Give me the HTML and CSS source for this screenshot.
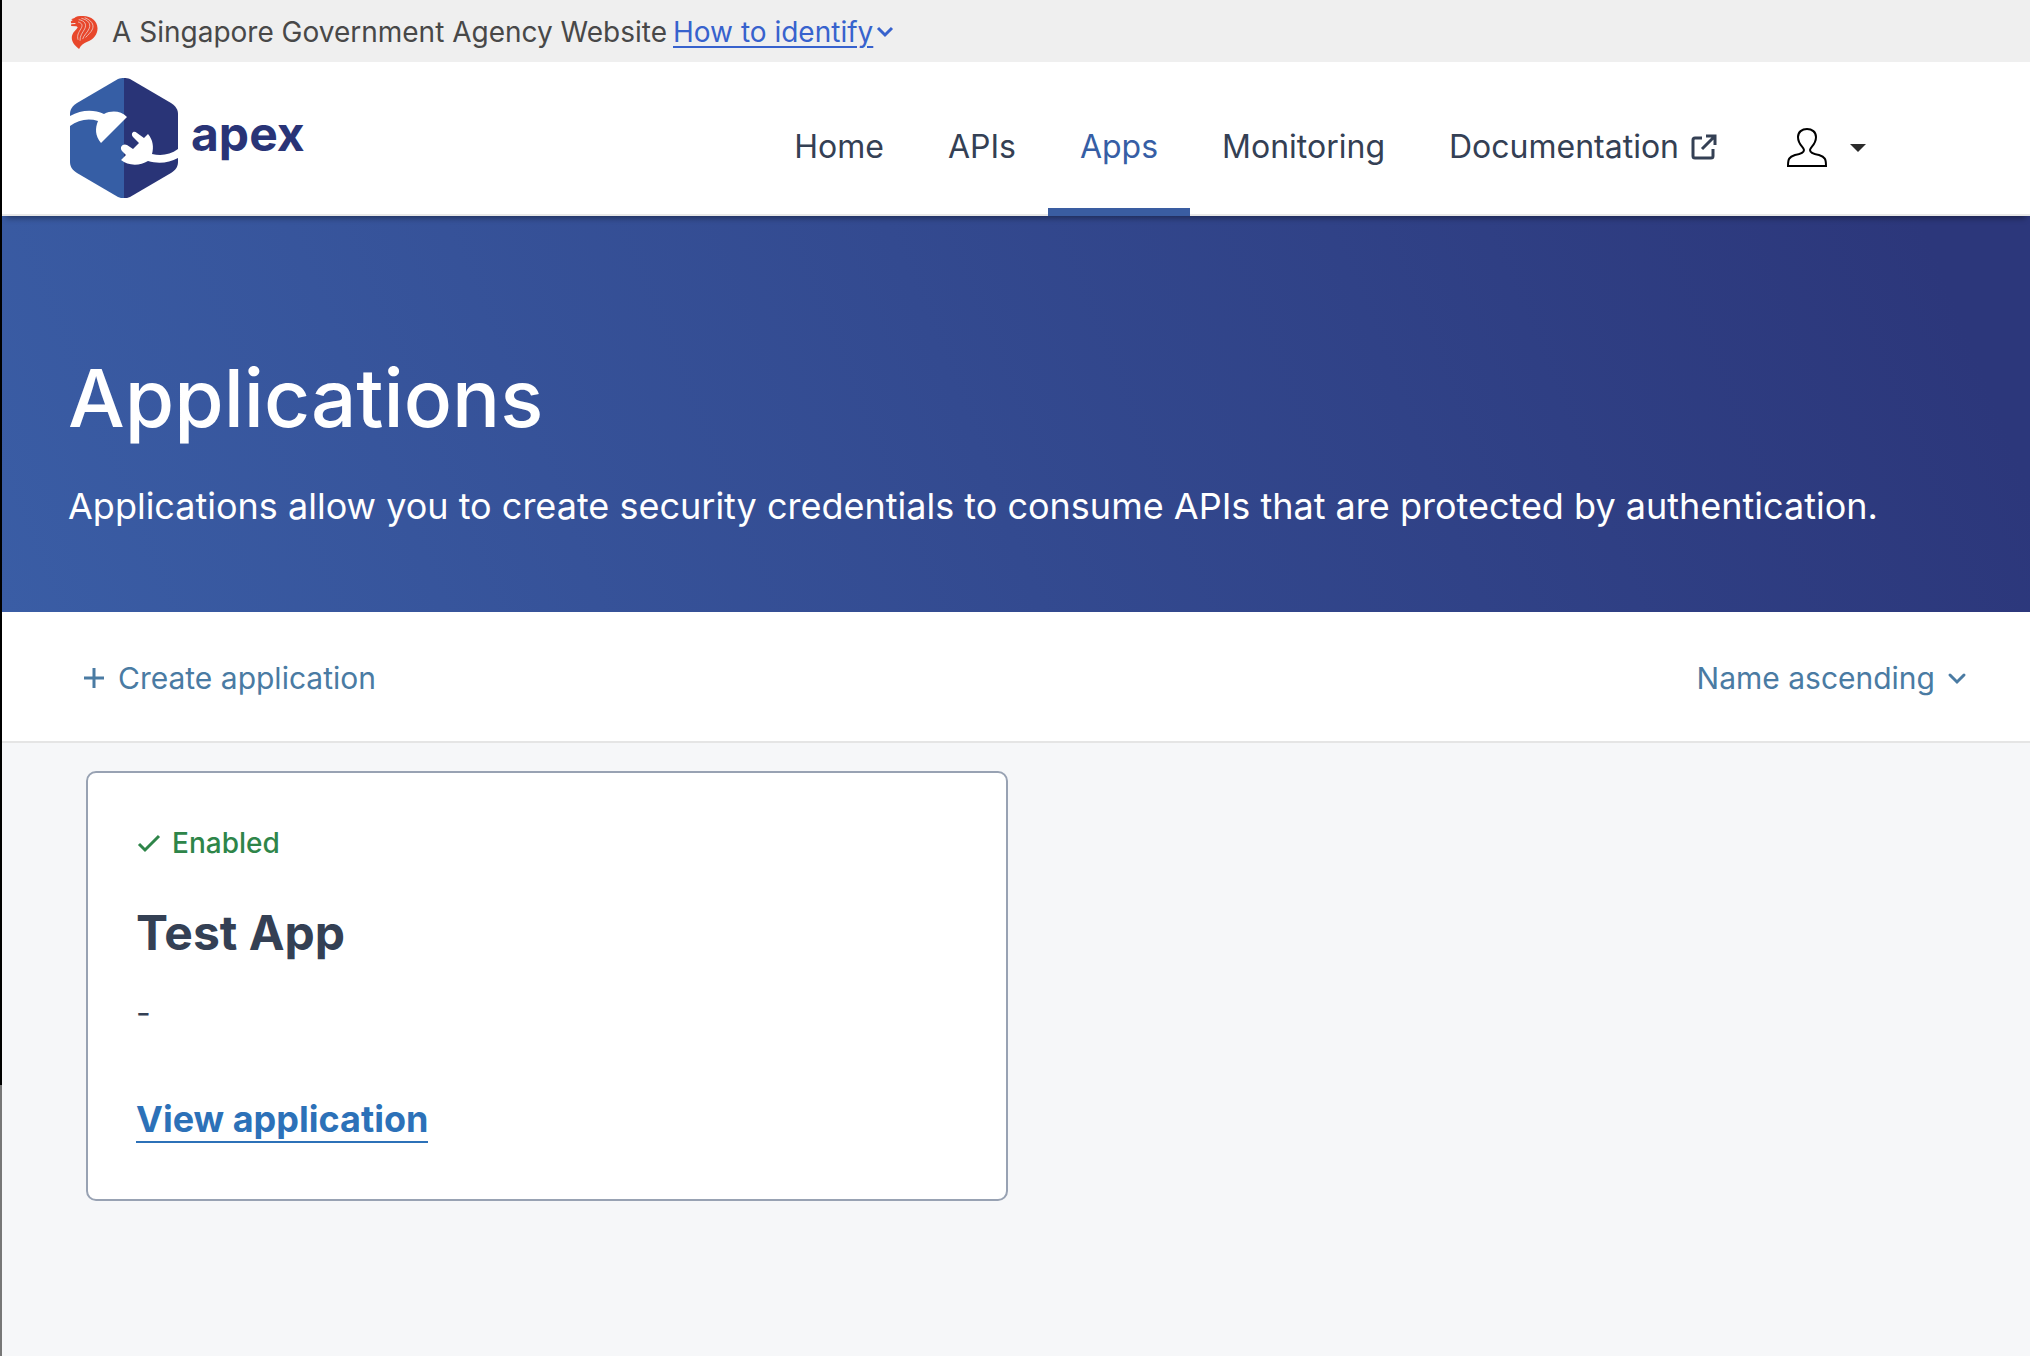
FILE: index.html
```html
<!DOCTYPE html>
<html lang="en">
<head>
<meta charset="utf-8">
<title>Applications - APEX</title>
<meta name="viewport" content="width=device-width, initial-scale=1">
<link rel="stylesheet" href="styles.css">
</head>
<body>
<div class="gov-banner">
  <svg class="lion" viewBox="21 36 82 100" aria-hidden="true">
    <path fill="#e8472b" d="M22 53l6-5-5-2 10-4c4-5 14-6 26-6 26 0 43 15 44 37 0 18-11 33-31 41-11 4-20 11-25 22-12-9-22-20-22-33 0-14 8-20 14-27l4-6-4-3-16-1v-5l13-1v-3l-13 1z"/>
    <g fill="none" stroke="#efefef" stroke-width="2"><path d="M44 54c12 3 15 10 9 20-7 12-13 20-9 34"/><path d="M46 47c18 3 25 14 18 28-6 12-15 20-14 36"/><path d="M54 43c21 5 29 16 24 30-5 13-17 21-20 33"/><path d="M64 41c20 8 29 20 24 34-5 12-14 17-21 26"/></g>
  </svg>
  <span>A Singapore Government Agency Website</span>
  <a class="identify" href="#identify"><span class="identify-text">How to identify</span><svg class="identify-chevron" viewBox="0 0 18 12" aria-hidden="true"><path d="M2 2l7 7 7-7" fill="none" stroke="currentColor" stroke-width="3"/></svg></a>
</div>

<header class="site-header">
  <a class="brand" href="#home">
    <svg class="brand-mark" viewBox="0 0 108 120" aria-hidden="true">
      <path fill="#365ea5" d="M54 0c-2 0-4 0-6 1L7 25c-5 3-7 7-7 11v48c0 4 2 8 7 11l41 24c2 1 4 1 6 1z"/>
      <path fill="#293477" d="M54 0c2 0 4 0 6 1l41 24c5 3 7 7 7 11v48c0 4-2 8-7 11l-41 24c-2 1-4 1-6 1z"/>
      <path fill="#fff" d="M0 38c11-6 23-7 34-2 8-4 17-3 23 3L31 65c-6-7-6-15-3-22C18 40 8 42 0 48z"/>
      <path fill="#fff" d="M51 82l5-5-4-4c-3-4 1-8 5-6l6 4 6-6-6-6c-3-4 1-7 4-4l7 5 4-4c5 6 6 13 4 20 9 2 18 1 26-5v9c-9 5-20 6-30 3-8 5-20 5-27-1z"/>
    </svg>
    <span class="brand-name">apex</span>
  </a>
  <nav class="main-nav">
    <a class="nav-link" href="#home">Home</a>
    <a class="nav-link" href="#apis">APIs</a>
    <a class="nav-link active" href="#apps" aria-current="page">Apps</a>
    <a class="nav-link" href="#monitoring">Monitoring</a>
    <a class="nav-link" href="#docs">Documentation<svg class="external" viewBox="0 0 26 26" aria-hidden="true"><path d="M11 4H4q-2 0-2 2v16q0 2 2 2h16q2 0 2-2v-7M15 2h9v9M23 3L11 15" fill="none" stroke="currentColor" stroke-width="3"/></svg></a>
    <button class="user-menu" type="button" aria-label="Account">
      <svg class="user-icon" viewBox="0 0 40 40" aria-hidden="true"><path d="M1 38c0-7 1-9 7-11 6-1 9-3 9-5 0-3-6-5-6-13C11 4 15 1 20 1s9 3 9 8c0 8-6 10-6 13 0 2 3 4 9 5 6 2 7 4 7 11z" fill="none" stroke="#000" stroke-width="2"/></svg>
      <svg class="caret" viewBox="0 0 16 8" aria-hidden="true"><path d="M0 0h16L8 8z" fill="#2b2b2b"/></svg>
    </button>
  </nav>
</header>

<main>
  <section class="hero">
    <h1 class="hero-title">Applications</h1>
    <p class="hero-text">Applications allow you to create security credentials to consume APIs that are protected by authentication.</p>
  </section>

  <div class="toolbar">
    <button class="tool" type="button"><svg class="plus" viewBox="0 0 20 20" aria-hidden="true"><path d="M10 0v20M0 10h20" stroke="currentColor" stroke-width="3"/></svg>Create application</button>
    <button class="tool" type="button">Name ascending<svg class="sort-chevron" viewBox="0 0 18 12" aria-hidden="true"><path d="M2 3l7 7 7-7" fill="none" stroke="currentColor" stroke-width="3" stroke-linecap="round"/></svg></button>
  </div>

  <div class="app-grid">
    <article class="app-card">
      <p class="status"><svg class="check" viewBox="0 0 22 18" aria-hidden="true"><path d="M1 10l6 6L21 2" fill="none" stroke="currentColor" stroke-width="3"/></svg>Enabled</p>
      <h2 class="app-name">Test App</h2>
      <p class="app-description">-</p>
      <a class="app-link" href="#test-app">View application</a>
    </article>
  </div>
</main>
</body>
</html>
```
FILE: styles.css
```css
* { box-sizing: border-box; }

body {
  margin: 0;
  min-height: 100vh;
  border-left: 2px solid #000;
  border-image: linear-gradient(#000 80%, #777 80%) 1;
  background: #f6f7f9;
  color: #344054;
  font-family: Inter, "Liberation Sans", sans-serif;
}

h1, h2, p { margin: 0; }
a { color: inherit; text-decoration: none; }
button { padding: 0; border: 0; background: none; color: inherit; font: inherit; }
svg { flex: none; overflow: visible; }

.gov-banner {
  display: flex;
  align-items: center;
  height: 62px;
  padding: 2px 68px 0;
  background: #efefef;
  color: #484848;
  font-size: 28px;
  line-height: 36px;
}
.lion { width: 28px; height: 33px; margin-right: 14px; }
.identify { display: flex; align-items: center; margin-left: 6px; color: #3762cd; }
.identify-text { text-decoration: underline; text-decoration-thickness: 2px; text-underline-offset: 4px; }
.identify-chevron { width: 18px; height: 12px; margin-left: 3px; }

.site-header {
  position: relative;
  display: flex;
  align-items: center;
  justify-content: space-between;
  height: 154px;
  padding: 0 164px 0 68px;
  background: #fff;
  box-shadow: inset 0 -2px #e8e8e8, 0 6px 6px -4px rgba(0, 0, 0, 0.4);
}
.brand { display: flex; align-items: center; gap: 13px; padding-bottom: 2px; color: #293477; }
.brand-mark { width: 108px; height: 120px; }
.brand-name { padding-bottom: 8px; font-size: 48px; line-height: 64px; font-weight: 700; }

.main-nav { display: flex; align-self: stretch; font-size: 32px; line-height: 40px; }
.nav-link {
  display: flex;
  align-items: center;
  padding: 24px 32px 0;
  border-bottom: 8px solid transparent;
}
.nav-link.active { border-color: #3a5da1; color: #365ea5; }
.external { width: 26px; height: 26px; margin-left: 12px; }
.user-menu { display: flex; align-items: center; gap: 23px; padding: 18px 0 0 38px; }
.user-icon { width: 40px; height: 40px; }
.caret { width: 16px; height: 8px; }

.hero {
  padding: 132px 66px 80px;
  background: linear-gradient(68deg, #3a5da5, #2c377b 95%);
  color: #fff;
}
.hero-title { font-size: 80px; line-height: 100px; font-weight: 500; }
.hero-text { margin-top: 32px; font-size: 36px; line-height: 52px; }

.toolbar {
  display: flex;
  align-items: center;
  justify-content: space-between;
  height: 131px;
  padding: 2px 64px 0 82px;
  border-bottom: 2px solid #e5e5e5;
  background: #fff;
  color: #4a7ba3;
  font-size: 30px;
  line-height: 40px;
}
.tool { display: flex; align-items: center; }
.plus { width: 20px; height: 20px; margin-right: 14px; }
.sort-chevron { width: 18px; height: 12px; margin-left: 13px; }

.app-grid {
  display: grid;
  grid-template-columns: repeat(2, minmax(0, 1fr));
  gap: 28px;
  padding: 28px 72px 48px 84px;
}
.app-card {
  display: flex;
  flex-direction: column;
  align-items: flex-start;
  padding: 48px 48px 56px;
  border: 2px solid #98a2b3;
  border-radius: 10px;
  background: #fff;
}
.status { display: flex; align-items: center; color: #2e8549; font-size: 28px; line-height: 44px; font-weight: 500; }
.check { width: 22px; height: 18px; margin: 0 12px 0 2px; }
.app-name { margin-top: 36px; font-size: 48px; line-height: 64px; font-weight: 700; }
.app-description { margin-top: 24px; font-size: 32px; line-height: 48px; }
.app-link { margin-top: 60px; border-bottom: 2px solid #2c71b8; color: #2c71b8; font-size: 36px; line-height: 44px; font-weight: 700; }
```
